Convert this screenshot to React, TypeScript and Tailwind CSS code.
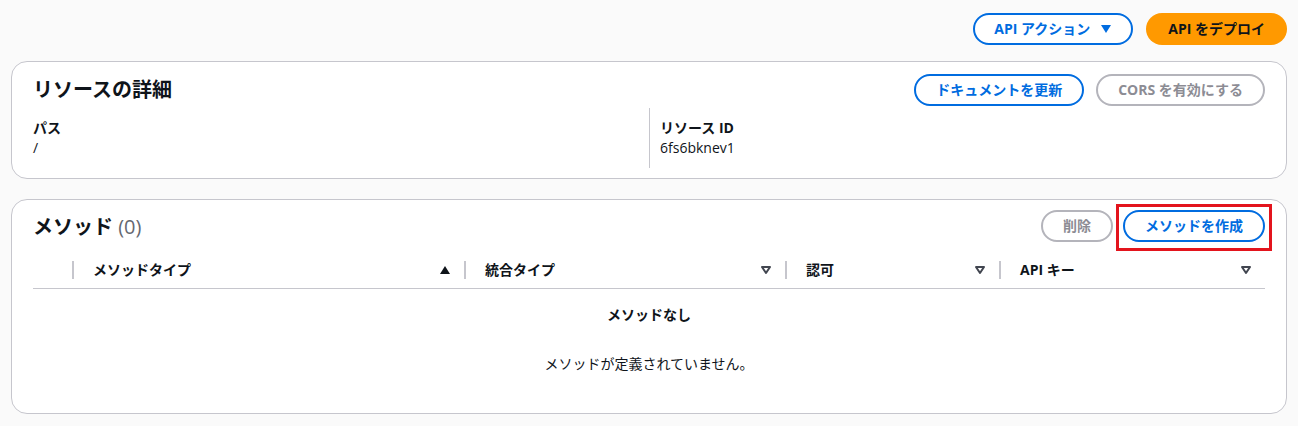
import React from 'react';

const FONT = { fontFamily: '"Open Sans", "Noto Sans CJK JP", sans-serif' };

function Caret({ className }: { className?: string }) {
  return (
    <svg width="12" height="10" viewBox="0 0 12 10" className={className}>
      <path d="M1 1 H11 L6 9 Z" fill="currentColor" />
    </svg>
  );
}

function SortUp() {
  return (
    <svg width="12" height="10" viewBox="0 0 12 10" className="text-[#0f141a]">
      <path d="M1 9 H11 L6 1 Z" fill="currentColor" />
    </svg>
  );
}

function SortNone() {
  return (
    <svg width="12" height="10" viewBox="0 0 12 10" className="text-[#424650]">
      <path d="M2 2 H10 L6 8 Z" fill="none" stroke="currentColor" strokeWidth="2" strokeLinejoin="round" />
    </svg>
  );
}

function PrimaryOutline({ children, tight }: { children: React.ReactNode; tight?: boolean }) {
  return (
    <button
      className={
        tight
          ? 'flex h-8 items-center gap-[10px] rounded-full border-2 border-[#006ce0] bg-white px-[19px] text-sm font-bold text-[#006ce0]'
          : 'flex h-8 items-center rounded-full border-2 border-[#006ce0] bg-white px-[20px] text-sm font-bold text-[#006ce0]'
      }
    >
      {children}
    </button>
  );
}

function DisabledButton({ children }: { children: React.ReactNode }) {
  return (
    <button className="flex h-8 items-center rounded-full border-2 border-[#b4b4bb] bg-white px-[20px] text-sm font-bold text-[#8c8c94]">
      {children}
    </button>
  );
}

function HeaderCell({
  label,
  icon,
  divider = true,
}: {
  label: string;
  icon: React.ReactNode;
  divider?: boolean;
}) {
  return (
    <div className="flex h-[31px] items-center">
      {divider && <div className="h-[18px] w-[2px] bg-[#c6c6cd]" />}
      <span className="ml-[19px] flex-1 text-sm font-bold text-[#0f141a]">{label}</span>
      <span className="mr-[13px] flex items-center">{icon}</span>
    </div>
  );
}

export default function App() {
  return (
    <div className="min-h-[426px] bg-[#fafafa] px-[11px] pt-[13px] text-[#0f141a]" style={FONT}>
      {/* top actions */}
      <div className="flex justify-end gap-[13px]">
        <PrimaryOutline tight>
          API アクション
          <Caret />
        </PrimaryOutline>
        <button className="h-8 rounded-full bg-[#ff9900] px-[22px] text-sm font-bold text-[#0f141a]">
          API をデプロイ
        </button>
      </div>

      {/* resource details */}
      <section className="mt-[16px] rounded-2xl border border-[#c6c6cd] bg-white px-[21px] pb-[10px] pt-[12px]">
        <div className="flex items-center justify-between">
          <h2 className="text-xl font-bold">リソースの詳細</h2>
          <div className="flex gap-3">
            <PrimaryOutline>ドキュメントを更新</PrimaryOutline>
            <DisabledButton>CORS を有効にする</DisabledButton>
          </div>
        </div>
        <div className="mt-[2px] grid grid-cols-2">
          <div className="py-[10px]">
            <div className="text-sm font-bold">パス</div>
            <div className="text-sm">/</div>
          </div>
          <div className="border-l border-[#c6c6cd] py-[10px] pl-[10px]">
            <div className="text-sm font-bold">リソース ID</div>
            <div className="text-sm">6fs6bknev1</div>
          </div>
        </div>
      </section>

      {/* methods */}
      <section className="mt-[20px] rounded-2xl border border-[#c6c6cd] bg-white px-[21px] pt-[10px]">
        <div className="flex items-center justify-between">
          <h2 className="mt-[2px] text-xl font-bold">
            メソッド <span className="font-normal text-[#656871]">(0)</span>
          </h2>
          <div className="flex items-center gap-[10px]">
            <DisabledButton>削除</DisabledButton>
            <div className="relative">
              <PrimaryOutline>メソッドを作成</PrimaryOutline>
              <div className="pointer-events-none absolute -bottom-[9px] -left-[7px] -right-[7px] -top-[6px] border-[3px] border-[#e3141d]" />
            </div>
          </div>
        </div>

        <div className="mt-[12px] grid grid-cols-[39px_392px_321px_214px_1fr] border-b border-[#c6c6cd] pb-[3px]">
          <div />
          <HeaderCell label="メソッドタイプ" icon={<SortUp />} />
          <HeaderCell label="統合タイプ" icon={<SortNone />} />
          <HeaderCell label="認可" icon={<SortNone />} />
          <HeaderCell label="API キー" icon={<SortNone />} />
        </div>

        <div className="flex h-[124px] flex-col items-center pt-[16px]">
          <div className="text-sm font-bold">メソッドなし</div>
          <div className="mt-[29px] text-sm">メソッドが定義されていません。</div>
        </div>
      </section>
    </div>
  );
}
